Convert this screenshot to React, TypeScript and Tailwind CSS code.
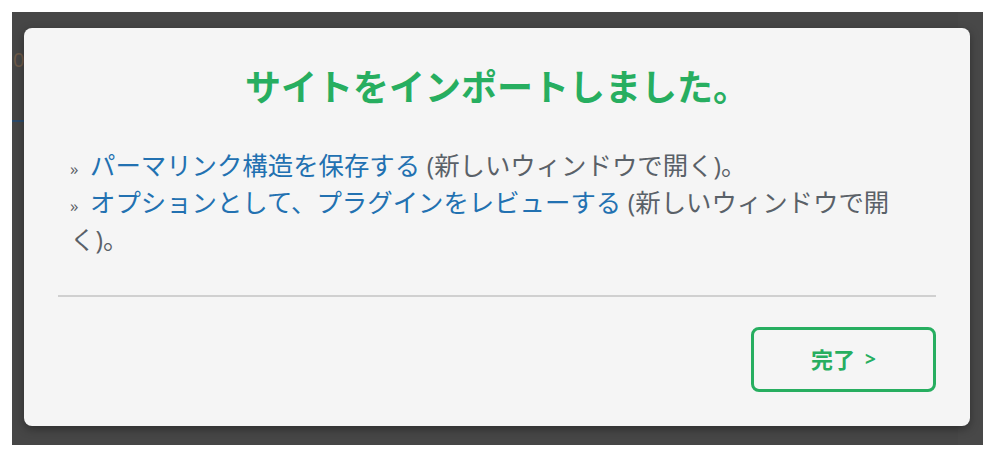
import React from 'react';

const App: React.FC = () => {
  return (
    <div className="w-[993px] h-[452px] bg-white pt-[12px] pl-[12px]">
      {/* dimmed page behind the modal */}
      <div className="relative w-[971px] h-[433px] bg-[#464646] pt-[16px] pl-[12px]">
        <span className="absolute left-[1px] top-[38px] text-[20px] leading-none text-[#6e5a48] font-['Open_Sans',sans-serif]">
          0
        </span>
        <div className="absolute left-0 top-[108px] w-[12px] h-[2px] bg-[#2b4a6a]" />
        <div className="absolute right-0 top-0 w-[25px] h-full bg-[#484848]" />

        <div
          className="relative w-[946px] h-[398px] bg-[#f5f5f5] rounded-[8px] shadow-[0_3px_10px_rgba(0,0,0,0.35)] px-[34px] pt-[33px] pb-[34px] flex flex-col font-['Open_Sans','Noto_Sans_CJK_JP',sans-serif]"
        >
          <h2 className="text-center text-[36px] leading-[54px] font-bold text-[#27ae60]">
            サイトをインポートしました。
          </h2>

          <div className="mt-[32px] pl-[12px] pr-[12px] text-[25.4px] leading-[37px] text-[#5a6168]">
            <p>
              <span className="inline-block w-[20px] text-[17px] leading-none">»</span>
              <a className="text-[#2271b1]">パーマリンク構造を保存する</a> (新しいウィンドウで開く)。
            </p>
            <p>
              <span className="inline-block w-[20px] text-[17px] leading-none">»</span>
              <a className="text-[#2271b1]">オプションとして、プラグインをレビューする</a> (新しいウィンドウで開く)。
            </p>
          </div>

          <div className="mt-[37px] h-[2px] bg-[#d0d0d0]" />

          <div className="mt-auto flex justify-end">
            <button className="w-[185px] h-[65px] rounded-[8px] border-[3px] border-[#27ae60] text-[#27ae60] font-bold text-[22px] flex items-center justify-center gap-[10px]">
              <span>完了</span>
              <span className="text-[19px]">&gt;</span>
            </button>
          </div>
        </div>
      </div>
    </div>
  );
};

export default App;
